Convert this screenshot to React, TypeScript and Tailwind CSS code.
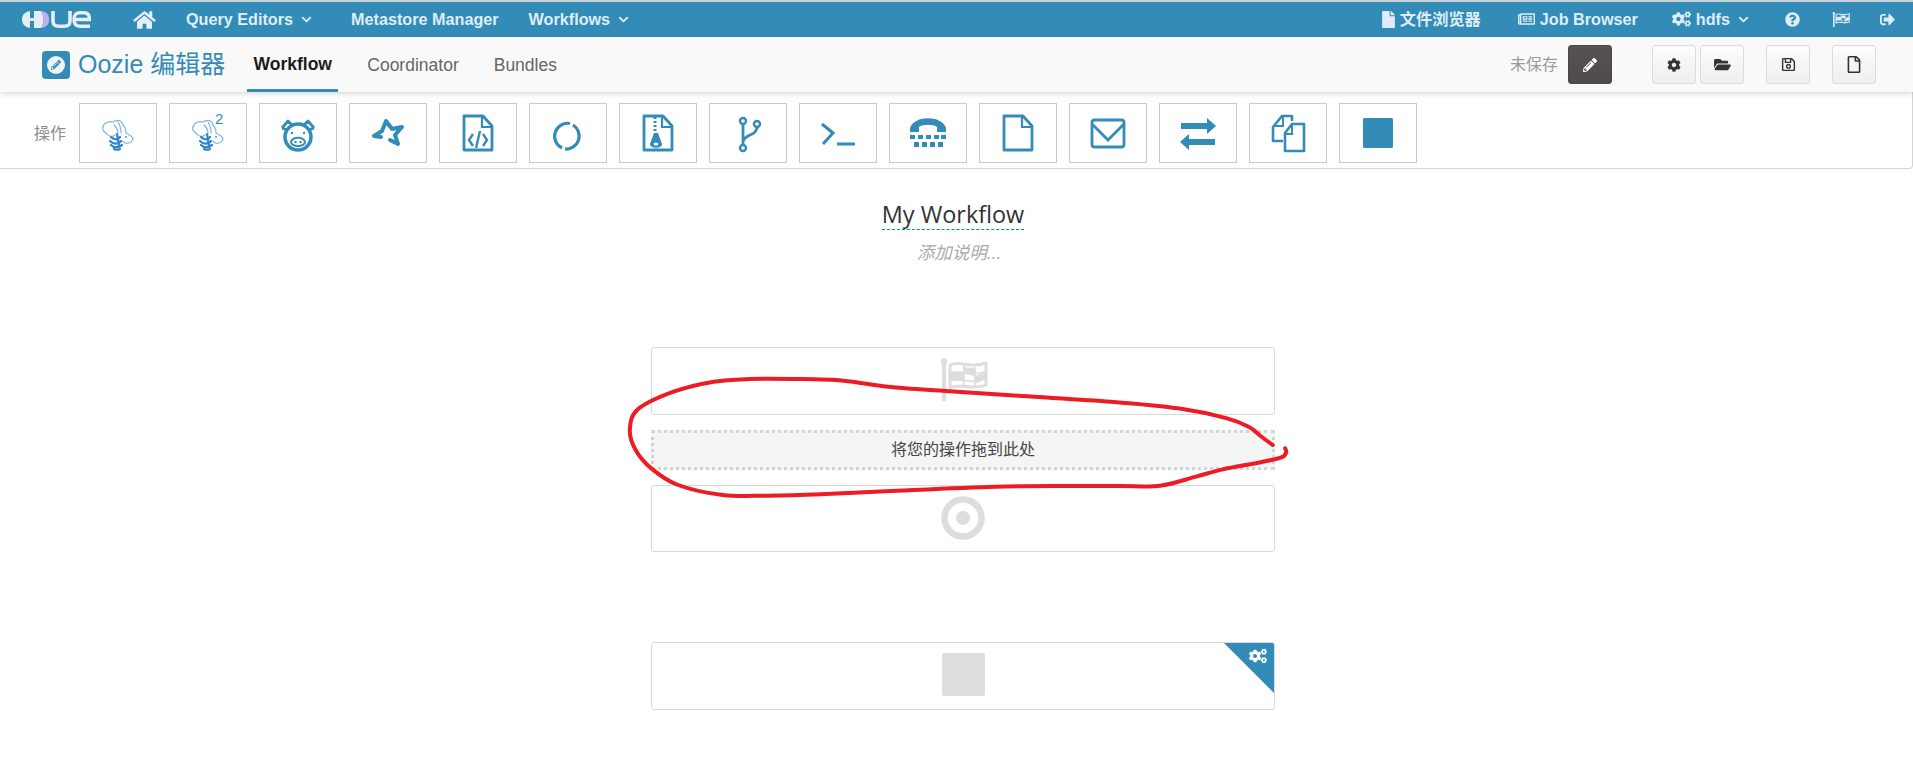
import React from 'react';
import { ChevronDown } from 'lucide-react';
import {
  FaCog,
  FaCogs,
  FaFile,
  FaFolderOpen,
  FaHome,
  FaPencilAlt,
  FaQuestionCircle,
  FaRegFile,
  FaRegNewspaper,
  FaRegSave,
  FaSignOutAlt,
} from 'react-icons/fa';

const BLUE = '#338bb8';

const Icon: React.FC<{ children: React.ReactNode }> = ({ children }) => (
  <svg viewBox="0 0 40 40" width="40" height="40" fill="none" stroke={BLUE} strokeWidth="3">
    {children}
  </svg>
);

const Hive: React.FC<{ two?: boolean }> = ({ two }) => (
  <svg viewBox="0 0 40 40" width="40" height="40" fill="none" strokeLinecap="round" className="overflow-visible">
    <g stroke="#7fb5de" strokeWidth="1.2">
      <path d="M5 14 C6 9 12 8 15 9 C19 6 24 7 25 12 C27 14 28 17 28 20 L33 23 C36 25 35 29 31 30 C28 31 26 30 25 28" />
      <path d="M5 14 C3 17 7 19 9 21 C11 24 15 24 17 22" />
      <path d="M20 9 C22 12 23 16 23 20" />
      <path d="M16 12 C18 14 20 17 20 20" />
      <circle cx="28" cy="24" r="0.6" />
    </g>
    <g stroke="#2f86c5" strokeWidth="2.2">
      <path d="M13 24 C15 26 19 28 22 24" />
      <path d="M12 28 C15 31 20 32 23 28" />
      <path d="M13 32 C16 35 20 35 24 32" />
      <path d="M16 36 C18 37 20 37 22 36" />
      <path d="M19 21 L21 33" />
    </g>
    {two && (
      <text x="27" y="11" fill={BLUE} fontSize="15" fontFamily="'Liberation Sans', sans-serif">
        2
      </text>
    )}
  </svg>
);

const Pig = () => (
  <Icon>
    <circle cx="20" cy="24" r="13" strokeWidth="3.5" />
    <path d="M4 15 L10 8 L15 13 M36 15 L30 8 L25 13 M4 15 L9 17 M36 15 L31 17" strokeWidth="2.8" strokeLinejoin="round" />
    <ellipse cx="20" cy="29" rx="7" ry="4.2" strokeWidth="2" />
    <circle cx="17.5" cy="29" r="1.2" fill={BLUE} stroke="none" />
    <circle cx="22.5" cy="29" r="1.2" fill={BLUE} stroke="none" />
    <circle cx="14" cy="20" r="1.2" fill={BLUE} stroke="none" />
    <circle cx="26" cy="20" r="1.2" fill={BLUE} stroke="none" />
  </Icon>
);

const Spark = () => (
  <Icon>
    <path
      d="M6 23 L14 18 L18 8 L24 16 L34 14 L27 22 L30 31 L22 27 M6 23 L13 24"
      strokeWidth="4"
      strokeLinecap="round"
      strokeLinejoin="round"
    />
  </Icon>
);

const Sheet: React.FC<{ children?: React.ReactNode }> = ({ children }) => (
  <Icon>
    <path d="M6 3 H25 L34 13 V37 H6 Z" strokeLinejoin="round" strokeWidth="2.8" />
    <path d="M24 3 V14 H34" strokeWidth="2.2" />
    {children}
  </Icon>
);

const FileCode = () => (
  <Sheet>
    <path d="M15 21 L11 27 L15 33 M25 21 L29 27 L25 33 M22 18 L18 35" strokeWidth="2.4" />
  </Sheet>
);

const Zip = () => (
  <Sheet>
    <path d="M17 4 V18" strokeWidth="3" strokeDasharray="2 2" />
    <path d="M16 20 H20 L24 31 C24 36 12 36 12 31 Z" fill={BLUE} stroke="none" />
    <ellipse cx="18" cy="31" rx="2.4" ry="1.6" fill="#fff" stroke="none" />
  </Sheet>
);

const Sync = () => (
  <Icon>
    <path d="M25 12 A13 13 0 0 1 17 36" strokeWidth="3.2" />
    <path d="M14 35 A13 13 0 0 1 22 10.5" strokeWidth="3.2" />
  </Icon>
);

const Branch = () => (
  <Icon>
    <circle cx="15" cy="8" r="3" strokeWidth="2.4" />
    <circle cx="15" cy="35" r="3" strokeWidth="2.4" />
    <circle cx="29" cy="11" r="3" strokeWidth="2.4" />
    <path d="M15 11 V32 M29 14 C29 23 16 21 15 29" strokeWidth="2.8" />
  </Icon>
);

const Terminal = () => (
  <Icon>
    <path d="M4 11 L15 20 L5 31" strokeWidth="3" />
    <path d="M19 31 H37" strokeWidth="3" />
  </Icon>
);

const Tty = () => (
  <svg viewBox="0 0 40 40" width="40" height="40" fill={BLUE}>
    <path d="M2 15 C6 2 34 2 38 15 V19 H29 V14 C25 11 15 11 11 14 V19 H2 Z" />
    <path d="M2 22h5v4H2zM10 22h5v4h-5zM18 22h5v4h-5zM26 22h5v4h-5zM33 22h5v4h-5zM6 29h5v5H6zM14 29h5v5h-5zM22 29h5v5h-5zM30 29h5v5h-5z" />
  </svg>
);

const Envelope = () => (
  <Icon>
    <rect x="4" y="7" width="32" height="27" rx="2.5" strokeWidth="2.8" />
    <path d="M4 11 L20 27 L36 11" strokeWidth="2.8" />
  </Icon>
);

const Exchange = () => (
  <svg viewBox="0 0 40 40" width="40" height="40" fill={BLUE}>
    <path d="M3 11 H29 V6 L38 14 L29 22 V17 H3 Z" transform="translate(0,-1)" />
    <path d="M37 24 H11 V19 L2 27 L11 35 V30 H37 Z" transform="translate(0,2)" />
  </svg>
);

const Files = () => (
  <Icon>
    <path d="M24 8 V3 H14 L5 14 V28 H15" strokeWidth="2.6" strokeLinejoin="round" />
    <path d="M15 3 V13 H5" strokeWidth="2" />
    <path d="M24 11 H36 V38 H17 V20 Z" strokeWidth="2.6" strokeLinejoin="round" />
    <path d="M24 11 V21 H17" strokeWidth="2" />
  </Icon>
);

const Stop = () => (
  <svg viewBox="0 0 40 40" width="40" height="40">
    <rect x="5" y="5" width="30" height="30" rx="1.5" fill={BLUE} />
  </svg>
);

const Flag: React.FC<{ size: number }> = ({ size }) => (
  <svg viewBox="0 0 49 43" width={size} height={(size * 43) / 49} fill="none" stroke="currentColor">
    <circle cx="5" cy="3.5" r="3.2" fill="currentColor" stroke="none" />
    <path d="M5 5 V43" strokeWidth="4.2" />
    <path d="M11 7 C20 2 32 11 47 5 V27 C34 33 22 24 11 30 Z" strokeWidth="3" strokeLinejoin="round" />
    <path d="M25 7 V30 M36 9 V29 M11 15 C20 11 32 20 47 13 M11 23 C20 18 32 28 47 20" strokeWidth="1.6" />
    <path d="M25 9 L36 10 V18 L25 16 Z M11 15 L25 13 V22 L11 23 Z M36 18 L47 14 V21 L36 26 Z" fill="currentColor" stroke="none" />
  </svg>
);

const HueLogo = () => (
  <svg viewBox="0 0 69 17" width="69" height="17" fill="none" className="block">
    <path d="M8 0 C2 1 0 5 0 8.5 C0 12 2 16 8 17 Z" fill="#e6eef3" />
    <path d="M12 0 H19 C22 4 22 13 19 17 H12 Z" fill="#e6eef3" />
    <path d="M8 7 H12 V10 H8 Z" fill="#e6eef3" />
    <path d="M19 0 C26 1 27 5 27 8.5 C27 12 26 16 19 17 C22 13 22 4 19 0 Z" fill="#c3b2ea" />
    <path d="M31 0 V10 C31 14 33 15.2 37 15.2 H42 C46 15.2 48 14 48 10 V0" stroke="#e6eef3" strokeWidth="3.6" />
    <path
      d="M68 15.2 H58 C54 15.2 52 13 52 8.5 C52 4 54 1.8 58 1.8 H62 C66 1.8 67.5 4 67.5 8.5 H53"
      stroke="#e6eef3"
      strokeWidth="3.4"
    />
  </svg>
);

const OozieIcon = () => (
  <div className="flex h-[28px] w-[28px] items-center justify-center rounded-[4px] bg-[#338bb8]">
    <div className="flex h-[18px] w-[18px] items-center justify-center rounded-full bg-[#eef5f9]">
      <FaPencilAlt className="h-[10px] w-[10px] text-[#338bb8]" />
    </div>
  </div>
);

// same curve as the hand drawn marker on the screenshot, coords are zoomed 1568x690
const ink = [
  [1462, 345], [1435, 318], [1410, 292], [1360, 265], [1250, 235], [1100, 215], [900, 198], [730, 183],
  [600, 170], [500, 152], [390, 147], [290, 147], [210, 155], [120, 185], [40, 238], [22, 300],
  [35, 360], [70, 415], [130, 465], [230, 495], [330, 497], [450, 493], [620, 482], [840, 470],
  [1000, 468], [1120, 468], [1210, 467], [1290, 440], [1350, 418], [1430, 398], [1480, 383], [1492, 368], [1490, 355],
];

// catmull-rom to bezier so the marker line stays smooth
const inkPath = ink.reduce((d, p, i) => {
  if (i === 0) return `M${p[0]} ${p[1]}`;
  const p0 = ink[Math.max(i - 2, 0)];
  const p1 = ink[i - 1];
  const p3 = ink[Math.min(i + 1, ink.length - 1)];
  const c1x = p1[0] + (p[0] - p0[0]) / 6;
  const c1y = p1[1] + (p[1] - p0[1]) / 6;
  const c2x = p[0] - (p3[0] - p1[0]) / 6;
  const c2y = p[1] - (p3[1] - p1[1]) / 6;
  return `${d} C${c1x} ${c1y} ${c2x} ${c2y} ${p[0]} ${p[1]}`;
}, '');

const actions = [
  <Hive key="hive" />,
  <Hive key="hive2" two />,
  <Pig key="pig" />,
  <Spark key="spark" />,
  <FileCode key="code" />,
  <Sync key="sync" />,
  <Zip key="zip" />,
  <Branch key="branch" />,
  <Terminal key="terminal" />,
  <Tty key="tty" />,
  <Sheet key="sheet" />,
  <Envelope key="mail" />,
  <Exchange key="exchange" />,
  <Files key="files" />,
  <Stop key="stop" />,
];

const NavItem: React.FC<{ label: string; caret?: boolean; className?: string }> = ({ label, caret, className }) => (
  <div className={`flex items-center ${className ?? ''}`}>
    <span>{label}</span>
    {caret && <ChevronDown className="ml-[6px] h-[15px] w-[15px]" strokeWidth={3} />}
  </div>
);

const ToolButton: React.FC<{ children: React.ReactNode; className?: string }> = ({ children, className }) => (
  <button
    className={`flex h-[39px] w-[44px] items-center justify-center rounded-[3px] border border-[#dcdcdc] bg-gradient-to-b from-[#fcfcfc] to-[#efefef] text-[#333] ${className ?? ''}`}
  >
    {children}
  </button>
);

export default function App() {
  return (
    <div className="relative h-[760px] overflow-hidden bg-white font-['Liberation_Sans','Noto_Sans_CJK_SC',sans-serif] text-[#333]">
      <div className="h-[2px] bg-[#c8d4da]" />
      <nav className="flex h-[35px] items-center bg-[#338bb8] pl-[22px] pr-[18px] text-[16.2px] font-bold text-[#dfeef6]">
        <HueLogo />
        <FaHome className="ml-[42px] h-[20px] w-[23px] text-[#e4f0f7]" />
        <NavItem label="Query Editors" caret className="ml-[30px]" />
        <NavItem label="Metastore Manager" className="ml-[37px]" />
        <NavItem label="Workflows" caret className="ml-[30px]" />
        <div className="ml-auto flex items-center">
          <FaFile className="h-[17px] w-[15px]" />
          <span className="ml-[4px]">文件浏览器</span>
          <FaRegNewspaper className="ml-[37px] h-[16px] w-[17px]" />
          <span className="ml-[5px]">Job Browser</span>
          <FaCogs className="ml-[34px] h-[16px] w-[19px]" />
          <NavItem label="hdfs" caret className="ml-[5px]" />
          <FaQuestionCircle className="ml-[34px] h-[15px] w-[15px]" />
          <div className="ml-[32px] text-[#dfeef6]">
            <Flag size={18} />
          </div>
          <FaSignOutAlt className="ml-[30px] h-[15px] w-[15px]" />
        </div>
      </nav>

      <header className="relative z-10 flex h-[55px] items-center bg-[#f9f9f9] pl-[42px] pr-[37px] shadow-[0_2px_5px_rgba(0,0,0,0.15)]">
        <OozieIcon />
        <span className="ml-[8px] text-[25px] leading-none text-[#338bb8]">Oozie 编辑器</span>
        <div className="ml-[22px] flex h-full items-end text-[17.5px]">
          <div className="flex h-full w-[91px] items-center justify-center border-b-[3px] border-[#338bb8] pt-[3px] font-bold text-[#1c1c1c]">
            Workflow
          </div>
          <span className="ml-[29px] flex h-full items-center pt-[2px] text-[#666]">Coordinator</span>
          <span className="ml-[35px] flex h-full items-center pt-[2px] text-[#666]">Bundles</span>
        </div>
        <div className="ml-auto flex items-center">
          <span className="text-[16px] text-[#999]">未保存</span>
          <ToolButton className="ml-[10px] !border-[#4a4646] !from-[#565254] !to-[#4f4b4d] !text-white">
            <FaPencilAlt className="h-[14px] w-[14px]" />
          </ToolButton>
          <ToolButton className="ml-[40px]">
            <FaCog className="h-[14px] w-[14px]" />
          </ToolButton>
          <ToolButton className="ml-[4px]">
            <FaFolderOpen className="h-[15px] w-[17px]" />
          </ToolButton>
          <ToolButton className="ml-[22px]">
            <FaRegSave className="h-[15px] w-[15px]" />
          </ToolButton>
          <ToolButton className="ml-[22px]">
            <FaRegFile className="h-[17px] w-[14px]" />
          </ToolButton>
        </div>
      </header>

      <section className="flex h-[77px] items-start rounded-br-[4px] border-b border-r border-[#d4d4d4] pl-[34px] pt-[11px]">
        <span className="mt-[21px] w-[45px] text-[16px] leading-[20px] text-[#8e8e8e]">操作</span>
        <div className="flex gap-[12px]">
          {actions.map((icon, i) => (
            <div key={i} className="flex h-[60px] w-[78px] items-center justify-center border border-[#c8c8c8]">
              {icon}
            </div>
          ))}
        </div>
      </section>

      <main className="flex flex-col">
        <div className="mt-[31px] flex justify-center pr-[7px]">
          <span className="border-b border-dashed border-[#0088cc] font-['Open_Sans','Noto_Sans_CJK_SC',sans-serif] text-[23.4px] leading-[29px] text-[#333]">
            My Workflow
          </span>
        </div>
        <div className="mt-[13px] flex justify-center pl-[5px]">
          <span className="text-[17.5px] italic leading-[20px] text-[#aaa]">添加说明...</span>
        </div>

        <div className="ml-[651px] mt-[84px] flex w-[624px] flex-col">
          <div className="flex h-[68px] items-center justify-center rounded-[3px] border border-[#d8d8d8] pb-[3px] text-[#dddddd]">
            <Flag size={49} />
          </div>
          <div className="mt-[15px] flex h-[40px] items-center justify-center border-[3px] border-dotted border-[#d4d4d4] bg-[#f5f5f5] text-[16px] text-[#444]">
            将您的操作拖到此处
          </div>
          <div className="mt-[15px] flex h-[67px] items-center justify-center rounded-[3px] border border-[#d8d8d8] pb-[2px]">
            <svg viewBox="0 0 44 44" width="44" height="44" fill="none">
              <circle cx="22" cy="22" r="18.5" stroke="#dddddd" strokeWidth="6.5" />
              <circle cx="22" cy="22" r="7" fill="#dddddd" />
            </svg>
          </div>
          <div className="relative mt-[90px] flex h-[68px] items-center justify-center overflow-hidden rounded-[3px] border border-[#d8d8d8] pb-[3px]">
            <div className="h-[43px] w-[43px] rounded-[2px] bg-[#dddddd]" />
            <div className="absolute right-0 top-0 h-0 w-0 border-l-[50px] border-t-[50px] border-l-transparent border-t-[#338bb8]" />
            <FaCogs className="absolute right-[7px] top-[5px] h-[16px] w-[18px] text-white" />
          </div>
        </div>
      </main>

      <svg
        viewBox="0 0 1568 690"
        preserveAspectRatio="none"
        className="pointer-events-none absolute left-[620px] top-[330px] h-[230px] w-[700px]"
        fill="none"
      >
        <path
          d={inkPath}
          stroke="#ed1c24"
          strokeWidth="4"
          strokeLinecap="round"
          strokeLinejoin="round"
          vectorEffect="non-scaling-stroke"
        />
      </svg>
    </div>
  );
}
